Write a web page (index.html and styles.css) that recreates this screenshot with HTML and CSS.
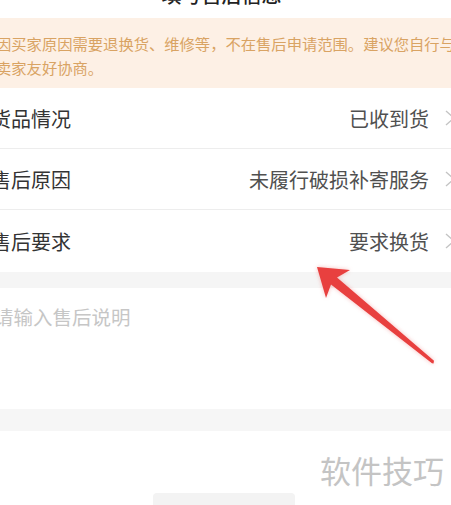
FILE: index.html
```html
<!DOCTYPE html>
<html lang="zh-CN">
<head>
<meta charset="utf-8">
<link rel="stylesheet" href="styles.css">
</head>
<body>
<div class="page">
  <header class="header"><h1 class="title">填写售后信息</h1></header>
  <div class="notice">
    <p class="notice-text">因买家原因需要退换货、维修等，不在售后申请范围。建议您自行与卖家友好协商。</p>
  </div>
  <div class="list">
    <div class="row">
      <span class="label">货品情况</span>
      <span class="value">已收到货</span>
      <svg class="chev" width="12" height="18" viewBox="0 0 12 18"><path d="M1 2 L9 9 L1 16" fill="none" stroke="#c4c4c4" stroke-width="1.4"/></svg>
    </div>
    <div class="row">
      <span class="label">售后原因</span>
      <span class="value">未履行破损补寄服务</span>
      <svg class="chev" width="12" height="18" viewBox="0 0 12 18"><path d="M1 2 L9 9 L1 16" fill="none" stroke="#c4c4c4" stroke-width="1.4"/></svg>
    </div>
    <div class="row last">
      <span class="label">售后要求</span>
      <span class="value">要求换货</span>
      <svg class="chev" width="12" height="18" viewBox="0 0 12 18"><path d="M1 2 L9 9 L1 16" fill="none" stroke="#c4c4c4" stroke-width="1.4"/></svg>
    </div>
  </div>
  <div class="gap"></div>
  <div class="desc"><span class="placeholder">请输入售后说明</span></div>
  <div class="gap gap2"></div>
  <div class="footer">
    <span class="watermark">软件技巧</span>
    <div class="btn"></div>
  </div>
  <svg class="arrow" width="451" height="505" viewBox="0 0 451 505">
    <polygon points="317,267 350,270 337,277.5 434,360.8 433.5,363.5 432,363.2 331,284.5 326,298" fill="#e8403f"/>
  </svg>
</div>
</body>
</html>
```

FILE: styles.css
```css
* { box-sizing: border-box; margin: 0; padding: 0; }
html, body { width: 451px; height: 505px; overflow: hidden; background: #fff; }
body { font-family: "Noto Sans CJK SC", "Noto Sans", sans-serif; }
.page { position: relative; width: 451px; height: 505px; overflow: hidden; }
.header { height: 18px; overflow: hidden; display: flex; justify-content: center; }
.title { font-size: 20px; font-weight: 500; line-height: 20px; color: #222; margin-top: -15px; margin-left: -8px; }
.notice { height: 70px; background: #fdf0e5; padding-top: 13px; overflow: hidden; }
.notice-text { width: 470px; margin-left: -4px; font-size: 15.3px; line-height: 24px; color: #d9a363; }
.row { height: 61px; border-bottom: 1px solid #ededed; display: flex; align-items: center; }
.row.last { border-bottom: none; height: 62px; }
.label { font-size: 20px; color: #333; margin-left: -9px; }
.value { margin-left: auto; font-size: 20px; color: #505050; }
.chev { margin-left: 16px; margin-right: -6px; flex-shrink: 0; }
.gap { height: 16px; background: #f5f5f5; }
.desc { height: 121px; padding-top: 15px; }
.placeholder { display: block; font-size: 19.5px; line-height: 28px; color: #c6c6c6; margin-left: -6px; }
.gap2 { height: 22px; background: #f6f6f6; }
.footer { display: flex; flex-direction: column; }
.watermark { align-self: flex-end; margin-right: 7px; margin-top: 21px; font-size: 31px; line-height: 36px; color: #c4c4c4; }
.btn { margin-top: 5px; margin-left: 153px; width: 142px; height: 20px; background: #f3f3f3; border-radius: 4px; }
.arrow { position: absolute; top: 0; left: 0; pointer-events: none; filter: drop-shadow(0 0 2px rgba(232,64,63,0.35)); }
```
